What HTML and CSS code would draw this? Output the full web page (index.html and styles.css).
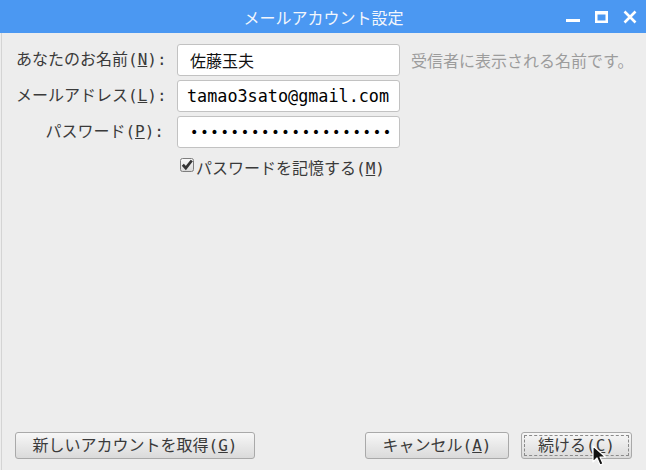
FILE: index.html
```
<!DOCTYPE html>
<html>
  <head>
    <meta charset="utf-8" />
    <title>メールアカウント設定</title>
    <link rel="stylesheet" href="styles.css">
  </head>
  <body>
    <div class="window">
      <header class="titlebar">
        <span class="title">メールアカウント設定</span>
        <div class="controls">
          <svg width="15" height="14" viewBox="0 0 15 14"><rect x="0" y="9" width="14" height="3" fill="#fff"/></svg>
          <svg width="14" height="14" viewBox="0 0 14 14"><path d="M0 1h13v12H0z M2.5 4.5v6h8v-6z" fill="#fff" fill-rule="evenodd"/></svg>
          <svg width="15" height="14" viewBox="0 0 15 14"><path d="M1.5 1.5l11 11M12.5 1.5l-11 11" stroke="#fff" stroke-width="2.6"/></svg>
        </div>
      </header>

      <main class="content">
        <div class="form">
          <label class="field-label" for="name-input">あなたのお名前(<u>N</u>):</label>
          <input class="field" id="name-input" type="text" value="佐藤玉夫" />
          <span class="hint">受信者に表示される名前です。</span>

          <label class="field-label" for="email-input">メールアドレス(<u>L</u>):</label>
          <input class="field mono" id="email-input" type="text" value="tamao3sato@gmail.com" />
          <span></span>

          <label class="field-label" for="password-input">パスワード(<u>P</u>):</label>
          <input class="field mono secret" id="password-input" type="text" value="••••••••••••••••••••" />
          <span></span>
        </div>

        <label class="remember">
          <svg class="checkbox" width="14" height="14" viewBox="0 0 14 14">
            <defs>
              <linearGradient id="cb" x1="0" y1="0" x2="0" y2="1">
                <stop offset="0" stop-color="#fafafa"/>
                <stop offset="1" stop-color="#d8d8d8"/>
              </linearGradient>
            </defs>
            <rect x="0.5" y="0.5" width="13" height="13" rx="2" fill="url(#cb)" stroke="#7e7e7e"/>
            <path d="M2.8 6.8l3 3.2 6-7.5" fill="none" stroke="#333" stroke-width="2.8"/>
          </svg>
          <span>パスワードを記憶する(<u>M</u>)</span>
        </label>

        <footer class="buttons">
          <button class="btn btn-new">新しいアカウントを取得(<u>G</u>)</button>
          <div class="right">
            <button class="btn btn-cancel">キャンセル(<u>A</u>)</button>
            <button class="btn btn-next"><span class="focus">続ける(<u>C</u>)</span></button>
          </div>
        </footer>

        <svg class="pointer" width="14" height="22" viewBox="0 0 14 22">
          <path d="M1 1v16l4-4 3 7 3-1.3-3-6.7h5.5z" fill="#111" stroke="#fff" stroke-width="1.2" stroke-linejoin="round"/>
        </svg>
      </main>
    </div>
  </body>
</html>
```

FILE: styles.css
```
      * {
        box-sizing: border-box;
      }

      html,
      body {
        margin: 0;
        height: 100%;
      }

      body {
        font-family: 'DejaVu Sans Mono', 'Noto Sans CJK JP', monospace;
        font-size: 16px;
        color: #3a3a3a;
        background: #ededed;
      }

      .window {
        display: flex;
        flex-direction: column;
        height: 470px;
        width: 646px;
      }

      .titlebar {
        height: 33px;
        flex: none;
        background: #4b98f2;
        color: #f2f6fc;
        display: flex;
        align-items: center;
        justify-content: center;
        position: relative;
      }

      .title {
        font-family: 'Noto Sans CJK JP', sans-serif;
        font-size: 16px;
        margin-left: 1px;
      }

      .controls {
        position: absolute;
        right: 8px;
        top: 10px;
        display: flex;
        gap: 14px;
      }

      .content {
        flex: 1;
        display: flex;
        flex-direction: column;
        padding: 11px 14px 11px 14px;
        border-left: 1px solid #d4d4d4;
        margin-left: 1px;
        position: relative;
      }

      .form {
        display: grid;
        grid-template-columns: 151px 223px auto;
        column-gap: 10px;
        row-gap: 4px;
        align-items: center;
      }

      .field-label {
        text-align: right;
        white-space: nowrap;
        line-height: 20px;
        padding-right: 3px;
      }

      .field {
        font: inherit;
        font-family: 'Noto Sans CJK JP', sans-serif;
        color: #111;
        height: 32px;
        width: 223px;
        border: 1px solid #c2c2c2;
        border-radius: 3px;
        background: #fff;
        padding: 0 0 1px 12px;
        margin: 0;
        outline: none;
      }

      .field.mono {
        font-family: 'DejaVu Sans Mono', monospace;
        font-size: 16.8px;
        padding-left: 9px;
        color: #000;
      }

      .field.secret {
        font-size: 14px;
        letter-spacing: 1.72px;
        padding-left: 12px;
      }

      .hint {
        color: #9c9c9c;
        white-space: nowrap;
        font-family: 'Noto Sans CJK JP', sans-serif;
        margin-left: 1px;
      }

      .remember {
        display: flex;
        align-items: center;
        margin: 7px 0 0 164px;
        height: 24px;
        gap: 2px;
      }

      .checkbox {
        margin-top: -4px;
      }

      .buttons {
        margin-top: auto;
        display: flex;
        justify-content: space-between;
        align-items: flex-end;
      }

      .right {
        display: flex;
        gap: 12px;
      }

      .btn {
        font: inherit;
        color: #3a3a3a;
        height: 27px;
        padding: 0;
        border: 1px solid #a9a9a9;
        border-radius: 3px;
        background: linear-gradient(#f7f7f7, #dadada);
        display: flex;
        align-items: center;
        justify-content: center;
        line-height: 20px;
      }

      .btn-new {
        width: 240px;
        margin-left: -1px;
      }

      .btn-cancel {
        width: 144px;
      }

      .btn-next {
        width: 111px;
        padding: 2px;
      }

      .focus {
        flex: 1;
        align-self: stretch;
        display: flex;
        align-items: center;
        justify-content: center;
        border: 1px dashed #8a8a8a;
        border-radius: 1px;
      }

      .pointer {
        position: absolute;
        left: 590px;
        top: 412px;
      }
```
